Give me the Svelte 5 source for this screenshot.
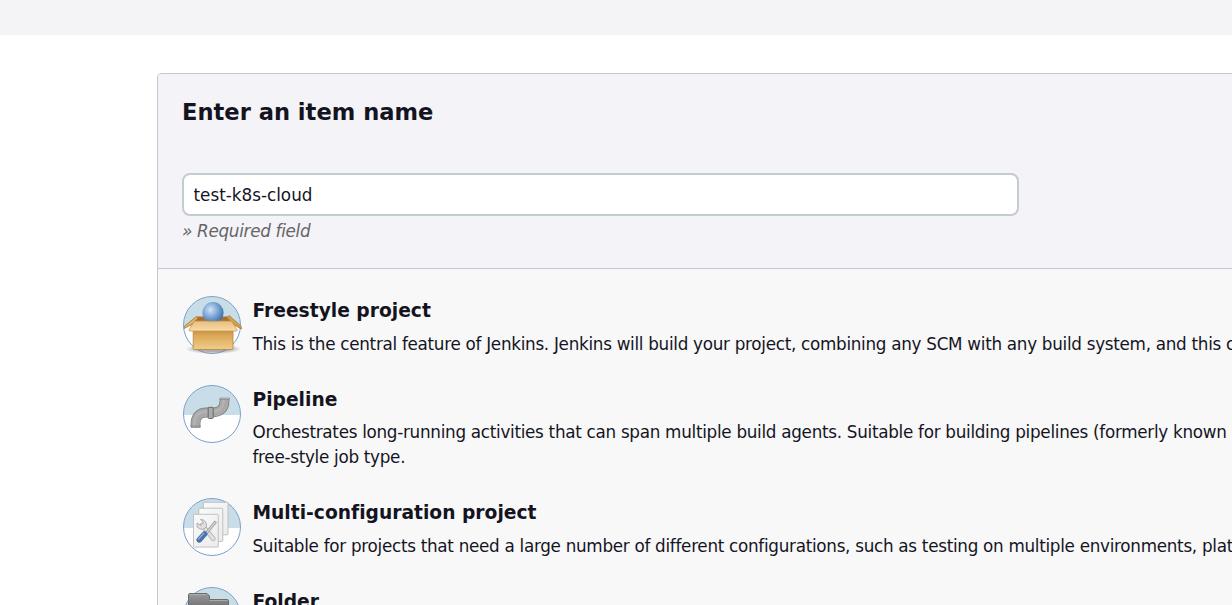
<script>
  const items = [
    { icon: 'box', title: 'Freestyle project', lines: ['This is the central feature of Jenkins. Jenkins will build your project, combining any SCM with any build system, and this can be even used'] },
    { icon: 'pipe', title: 'Pipeline', lines: ['Orchestrates long-running activities that can span multiple build agents. Suitable for building pipelines (formerly known', 'free-style job type.'] },
    { icon: 'matrix', title: 'Multi-configuration project', lines: ['Suitable for projects that need a large number of different configurations, such as testing on multiple environments, platform-specific builds, etc.'] },
    { icon: 'folder', title: 'Folder', lines: ['Creates a container that stores nested items in it.'] },
  ];
  let name = $state('test-k8s-cloud');
</script>

<div class="page">
  <header></header>
  <main>
    <section class="name">
      <h1>Enter an item name</h1>
      <input type="text" bind:value={name} spellcheck="false" />
      <p class="hint">» Required field</p>
    </section>
    <ul>
      {#each items as item}
        <li>
          <svg viewBox="6 7 60 60" width="60" height="60">
            <defs>
              <clipPath id="disc-{item.icon}"><circle cx="36" cy="37" r="28.3" /></clipPath>
              <linearGradient id="front" x1="0" y1="0" x2="0" y2="1"><stop offset="0" stop-color="#c18c40" /><stop offset=".3" stop-color="#dba856" /><stop offset="1" stop-color="#f1cd8b" /></linearGradient>
              <linearGradient id="flap" x1="0" y1="0" x2="0" y2="1"><stop offset="0" stop-color="#e9be7c" /><stop offset="1" stop-color="#f8dba8" /></linearGradient>
              <radialGradient id="ball" cx=".38" cy=".36" r=".65"><stop offset="0" stop-color="#d3e3f5" /><stop offset=".45" stop-color="#8bb1dc" /><stop offset="1" stop-color="#4272ac" /></radialGradient>
              <radialGradient id="shade"><stop offset=".5" stop-color="#777" stop-opacity=".6" /><stop offset="1" stop-color="#777" stop-opacity="0" /></radialGradient>
              <linearGradient id="sheet" x1="0" y1="0" x2="1" y2="1"><stop offset="0" stop-color="#fafafa" /><stop offset="1" stop-color="#ebebeb" /></linearGradient>
              <linearGradient id="metal" x1="0" y1="0" x2="0" y2="1"><stop offset="0" stop-color="#999" /><stop offset=".35" stop-color="#777" /><stop offset="1" stop-color="#aaa" /></linearGradient>
            </defs>
            <circle cx="36" cy="37" r="28.5" fill="#fff" />
            <rect x="6" y="7" width="60" height="31" fill="#c8dde7" clip-path="url(#disc-{item.icon})" />
            <circle cx="36" cy="37" r="28.5" fill="none" stroke="#7ba0cc" />

            {#if item.icon === 'box'}
              <ellipse cx="37.5" cy="61" rx="28" ry="5" fill="url(#shade)" />
              <path d="M17 31 20.5 28.5H54L57.5 33H17Z" fill="#a96f2c" />
              <path d="M20.5 28.500 8.500 38 8 40.500 15 37 22 30Z" fill="#dfb26c" stroke="#a97835" stroke-width=".8" />
              <path d="M53 27.500 65 38 65.500 41 58 37 51 29.500Z" fill="#d0a050" stroke="#a97835" stroke-width=".8" />
              <circle cx="37" cy="24.700" r="10.600" fill="url(#ball)" />
              <path d="M17.200 41.500H57V60.500Q57 61.500 56 61.500H18.200Q17.200 61.500 17.200 60.500Z" fill="url(#front)" stroke="#b5843f" stroke-width=".8" />
              <path d="M18.500 33.200H55.500L61.300 42.200Q61 43 60 43H14Q13 43 12.800 42.200Z" fill="url(#flap)" stroke="#c99a58" stroke-width=".8" />
            {:else if item.icon === 'pipe'}
              <g fill="none">
                <path d="M19.500 50V47Q19.500 35.500 31 35.500H35Q48.500 35.500 48.500 24V21.500" stroke="#777" stroke-width="9.800" />
                <path d="M19.500 49.300V47Q19.500 35.500 31 35.500H35Q48.500 35.500 48.500 24V22.200" stroke="#a8a8a8" stroke-width="8.400" />
                <path d="M18.500 49V46Q19 34.500 31 34.500H35Q47.500 34.500 47.500 24V22.500" stroke="#b3b3b3" stroke-width="2.500" />
              </g>
              <rect x="15.200" y="49" width="9" height="1.500" fill="#aaa" stroke="#777" stroke-width=".6" />
              <rect x="44" y="21" width="9.400" height="1.400" fill="#bbb" stroke="#888" stroke-width=".6" />
              <rect x="32.200" y="30.300" width="5" height="11.200" rx="1" fill="#aaa" stroke="#606060" stroke-width=".9" />
            {:else if item.icon === 'matrix'}
              <g fill="url(#sheet)" stroke="#bcbcbc" stroke-width=".9">
                <rect x="27.400" y="12.300" width="24.600" height="32.500" rx=".6" />
                <rect x="22.800" y="18.200" width="24" height="33.200" rx=".6" />
                <rect x="17.500" y="24.300" width="24.800" height="32.800" rx=".6" />
              </g>
              <path d="M26 35 37.300 48.700" fill="none" stroke="#aaa" stroke-width="4.600" stroke-linecap="round" />
              <path d="M26 35 37.300 48.700" fill="none" stroke="#e0e0e0" stroke-width="3.200" stroke-linecap="round" />
              <path d="M24.500 29.300Q31 30 30.500 36.500Q27 42 21 37V33L25 35.500 27.500 32.500Z" fill="#dedede" stroke="#a2a2a2" stroke-width=".8" />
              <path d="M39.800 31.500 30 43.500" stroke="#999" stroke-width="2.800" />
              <path d="M39.400 32 30 43.500" stroke="#d4d4d4" stroke-width="1.300" />
              <path d="M28.500 44 23.300 49.800" stroke="#4a72aa" stroke-width="5.600" stroke-linecap="round" />
              <path d="M27.700 43.300 22.600 49" stroke="#88a9d5" stroke-width="1.500" stroke-linecap="round" />
            {:else}
              <path d="M12.500 16Q12.500 14.500 14 14.500H31L33.500 17V20.500H51Q52.500 20.500 52.500 22V49H12.500Z" fill="url(#metal)" stroke="#6c6c6c" />
              <path d="M13.500 15.700H30.500" stroke="#b0b0b0" />
              <path d="M33.500 21.500H51.500" stroke="#aaa" />
            {/if}
          </svg>
          <div class="text">
            <h2>{item.title}</h2>
            <p>{#each item.lines as line}<span>{line}</span>{/each}</p>
          </div>
        </li>
      {/each}
    </ul>
  </main>
</div>

<style>
  :global(body) { margin: 0; overflow: hidden; }
  .page { height: 605px; overflow: hidden; background: #fff; color: #14141f; font-family: "DejaVu Sans", sans-serif; font-variant-ligatures: none; }
  header { height: 35px; background: #f4f4f6; }
  main { box-sizing: border-box; width: 1200px; margin: 38px 0 0 157px; border: 1px solid #c4c9cf; border-radius: 4px; background: #f8f8f8; overflow: hidden; }
  .name { box-sizing: border-box; height: 195px; padding: 24px; background: #f3f3f8; border-bottom: 1px solid #c4c9cf; }
  h1 { margin: 0 0 47px; font-size: 22.6px; line-height: 28px; font-weight: 700; }
  input { display: block; box-sizing: border-box; width: 837px; height: 43px; padding: 0 9.5px; border: 2px solid #c3ccd1; border-radius: 8px; background: #fff; color: #14141f; font: 16.8px "DejaVu Sans", sans-serif; outline: none; }
  .hint { margin: 3px 0 0; font-size: 16.8px; line-height: 25px; font-style: italic; letter-spacing: -.3px; color: #666; }
  ul { list-style: none; margin: 0; padding: 26px 24px; }
  li { display: flex; gap: 10.5px; margin-bottom: 26.9px; }
  svg { flex: none; }
  .text { flex: none; white-space: nowrap; }
  h2 { margin: 1px 0 6.7px; font-size: 18.68px; line-height: 29px; font-weight: 700; }
  li p { margin: 0; font-size: 16.8px; line-height: 25px; letter-spacing: -.288px; }
  span { display: block; }
</style>
